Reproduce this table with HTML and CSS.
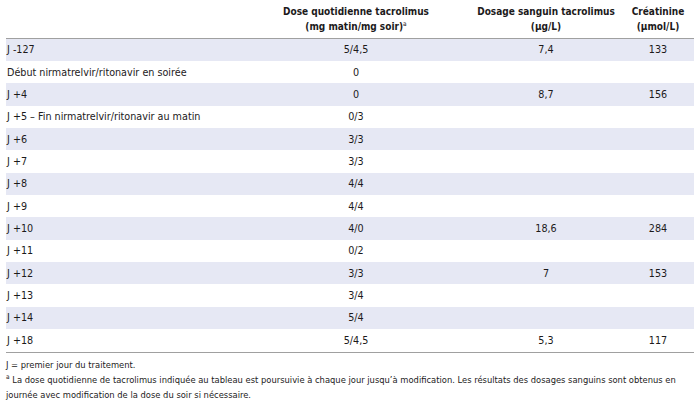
FILE: index.html
```html
<!DOCTYPE html>
<html lang="fr">
<head>
<meta charset="utf-8">
<link rel="stylesheet" href="styles.css">
</head>
<body>
<div class="wrap">
<table class="tbl">
  <colgroup>
    <col class="c1"><col class="c2"><col class="c3"><col class="c4">
  </colgroup>
  <thead>
    <tr>
      <th class="left"></th>
      <th>Dose quotidienne tacrolimus<br>(mg matin/mg soir)<sup>a</sup></th>
      <th>Dosage sanguin tacrolimus<br>(µg/L)</th>
      <th>Créatinine<br>(µmol/L)</th>
    </tr>
  </thead>
  <tbody>
    <tr class="sh"><td>J -127</td><td>5/4,5</td><td>7,4</td><td>133</td></tr>
    <tr><td>Début nirmatrelvir/ritonavir en soirée</td><td>0</td><td></td><td></td></tr>
    <tr class="sh"><td>J +4</td><td>0</td><td>8,7</td><td>156</td></tr>
    <tr><td>J +5 – Fin nirmatrelvir/ritonavir au matin</td><td>0/3</td><td></td><td></td></tr>
    <tr class="sh"><td>J +6</td><td>3/3</td><td></td><td></td></tr>
    <tr><td>J +7</td><td>3/3</td><td></td><td></td></tr>
    <tr class="sh"><td>J +8</td><td>4/4</td><td></td><td></td></tr>
    <tr><td>J +9</td><td>4/4</td><td></td><td></td></tr>
    <tr class="sh"><td>J +10</td><td>4/0</td><td>18,6</td><td>284</td></tr>
    <tr><td>J +11</td><td>0/2</td><td></td><td></td></tr>
    <tr class="sh"><td>J +12</td><td>3/3</td><td>7</td><td>153</td></tr>
    <tr><td>J +13</td><td>3/4</td><td></td><td></td></tr>
    <tr class="sh"><td>J +14</td><td>5/4</td><td></td><td></td></tr>
    <tr><td>J +18</td><td>5/4,5</td><td>5,3</td><td>117</td></tr>
  </tbody>
</table>
<div class="notes">
  <p>J = premier jour du traitement.</p>
  <p><sup>a</sup> La dose quotidienne de tacrolimus indiquée au tableau est poursuivie à chaque jour jusqu’à modification. Les résultats des dosages sanguins sont obtenus en<br>journée avec modification de la dose du soir si nécessaire.</p>
</div>
</div>
</body>
</html>
```

FILE: styles.css
```css
html, body {
  margin: 0;
  padding: 0;
  background: #ffffff;
}
body {
  font-family: "DejaVu Sans Condensed", "Liberation Sans", sans-serif;
  font-size: 10.7px;
  color: #1c1a1b;
}
.wrap {
  padding: 0 6px;
}
.tbl {
  width: 688px;
  border-collapse: collapse;
  table-layout: fixed;
}
.c1 { width: 236px; }
.c2 { width: 228px; }
.c3 { width: 152px; }
.c4 { width: 72px; }
.tbl th {
  font-size: 10px;
  font-weight: bold;
  text-align: center;
  vertical-align: bottom;
  line-height: 15px;
  height: 38px;
  padding: 0 0 4px 0;
  box-sizing: border-box;
  border-bottom: 1.5px solid #a0a0a0;
  white-space: nowrap;
}
.tbl th sup {
  font-size: 6.5px;
  line-height: 0;
  vertical-align: 4px;
  font-weight: normal;
}
.tbl td {
  height: 22.36px;
  padding: 0;
  text-align: center;
  vertical-align: middle;
  line-height: 13px;
}
.tbl td:first-child {
  text-align: left;
  padding-left: 1px;
}
.tbl tr.sh td {
  background: #e6e8f4;
}
.tbl tbody tr:last-child td {
  border-bottom: 1.5px solid #a0a0a0;
}
.notes {
  padding-top: 4px;
  font-size: 9.3px;
}
.notes p {
  margin: 0;
  line-height: 15.3px;
  white-space: nowrap;
}
.notes sup {
  font-size: 6.5px;
  line-height: 0;
  vertical-align: 4px;
}
```
